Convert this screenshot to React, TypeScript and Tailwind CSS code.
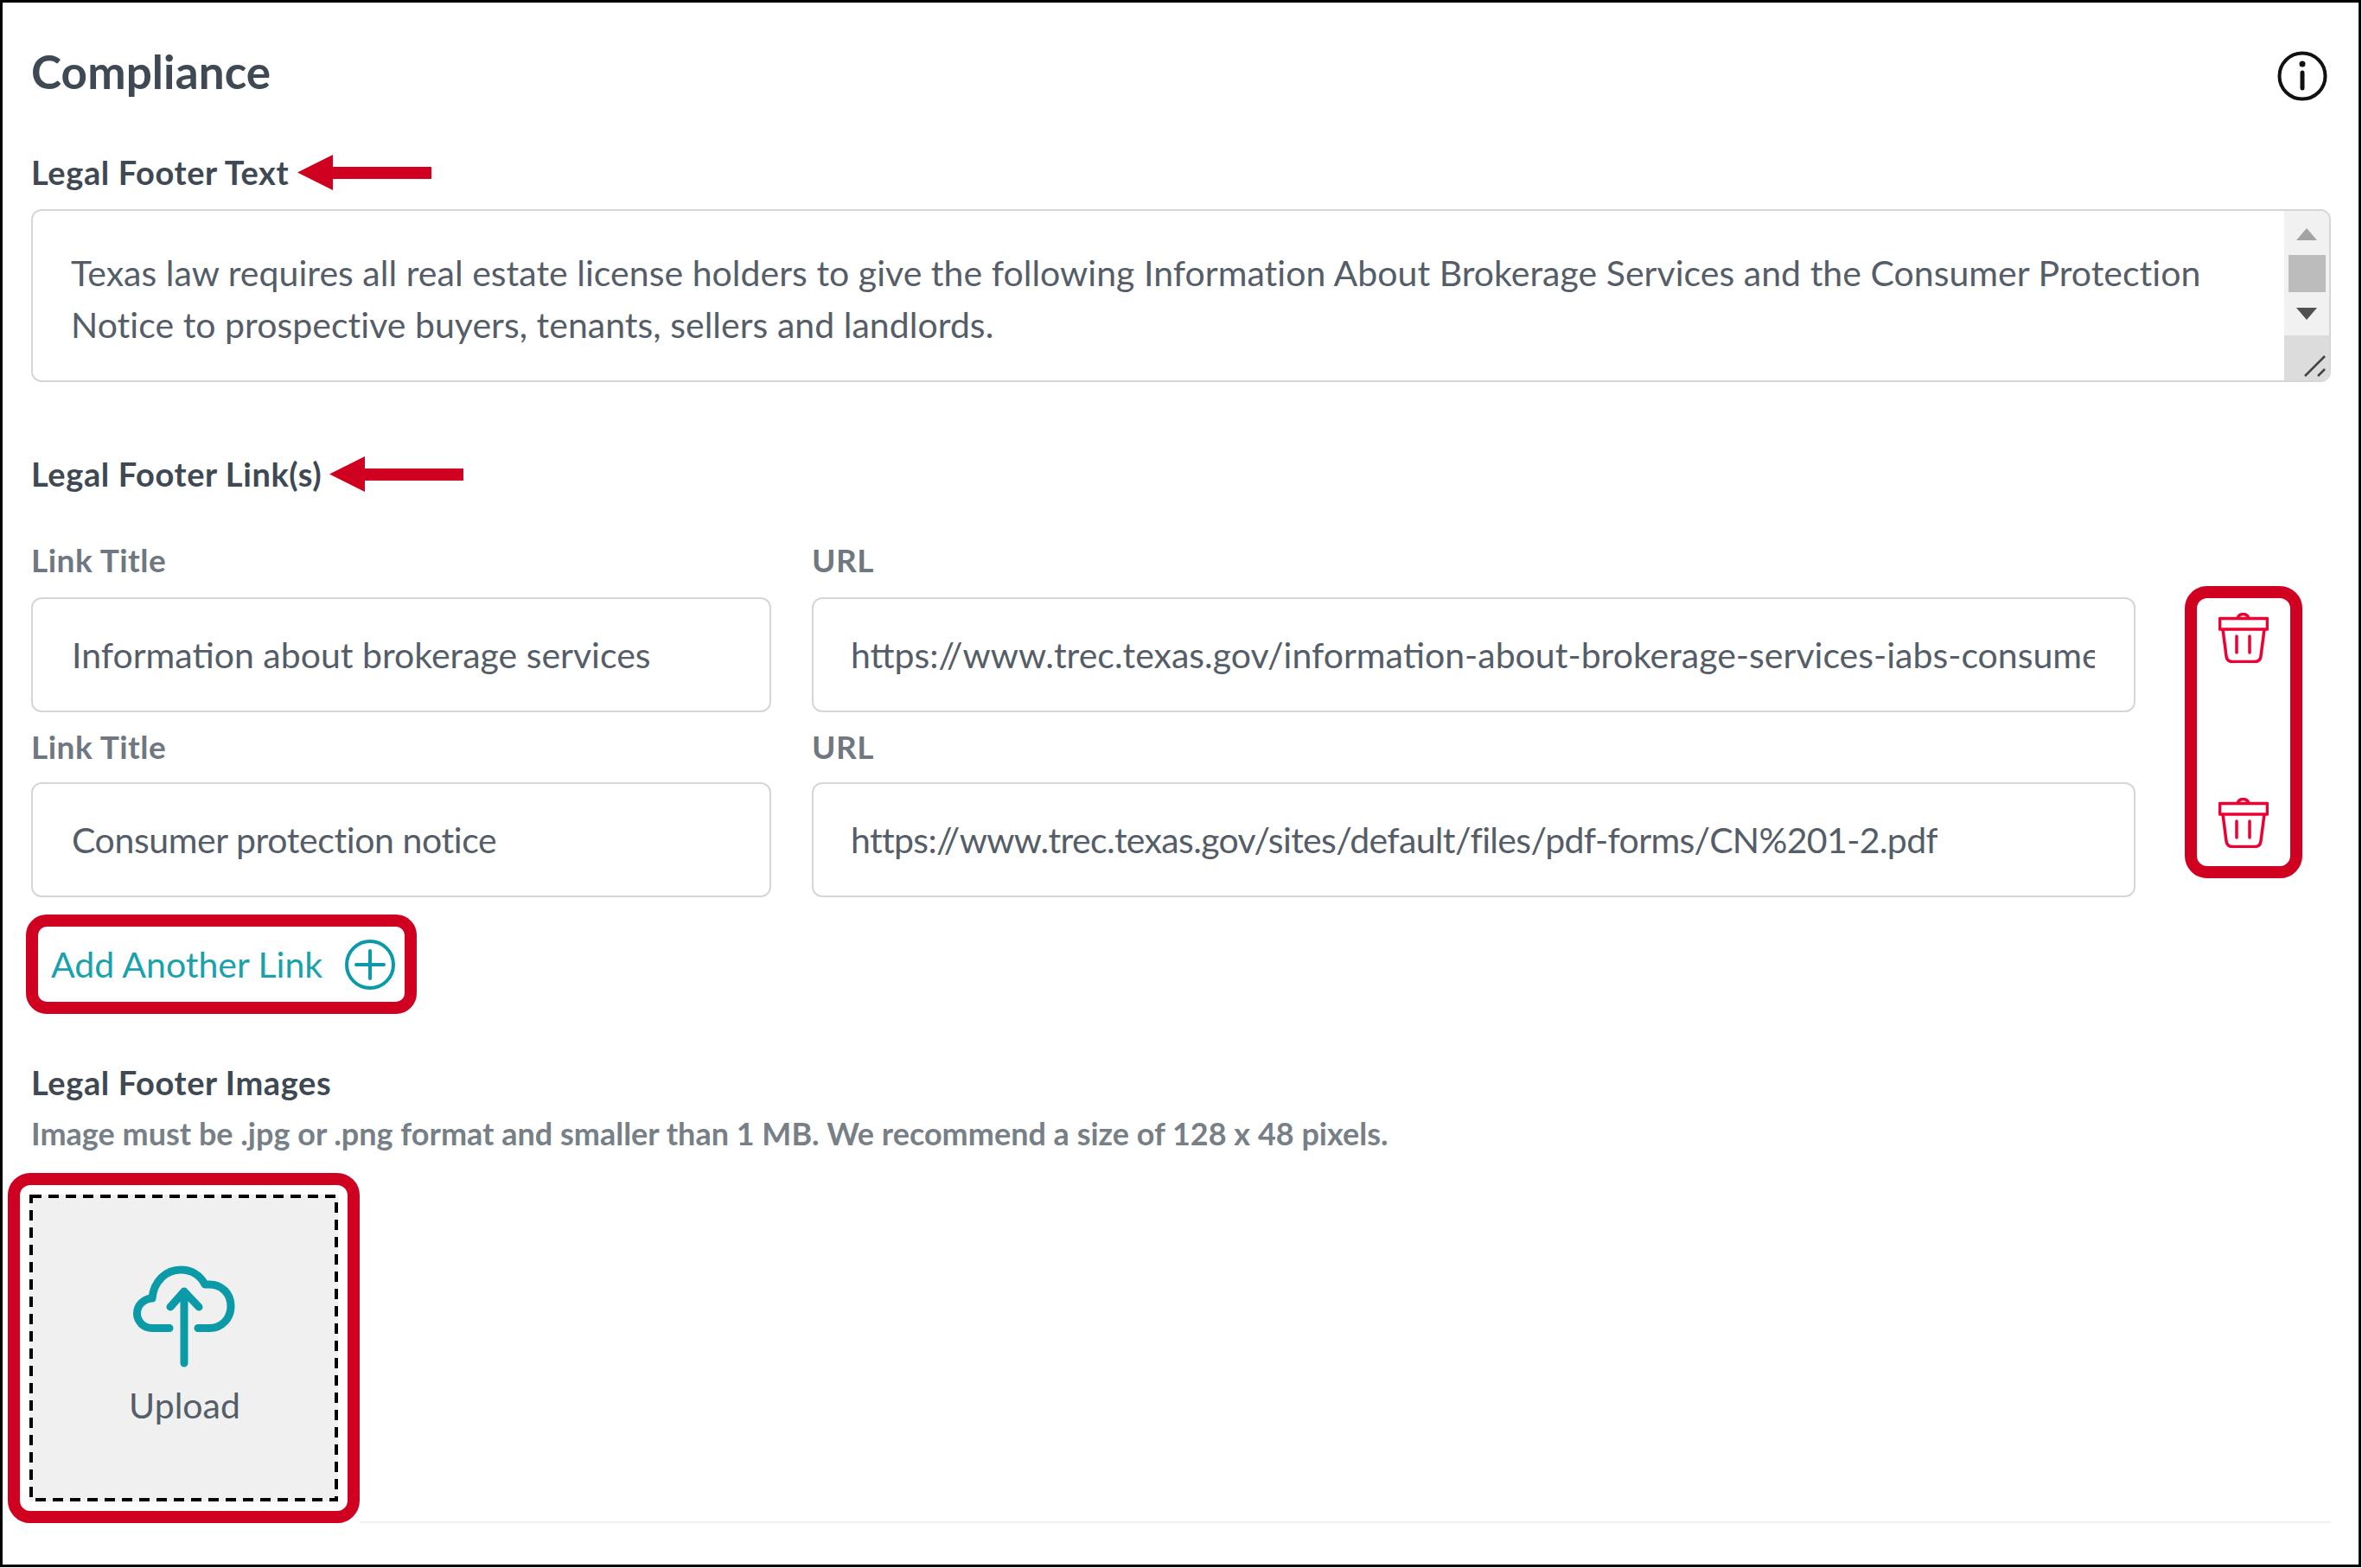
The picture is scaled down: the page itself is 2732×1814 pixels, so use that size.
import React from 'react';

const sans = "font-['Lato','Liberation_Sans',sans-serif]";

const RedArrow: React.FC = () => (
  <svg width="155" height="41" viewBox="0 0 155 41" className="shrink-0">
    <path d="M0 20.5 41 0V14H155V28H41V41Z" fill="#cf0020" />
  </svg>
);

const TrashIcon: React.FC = () => (
  <svg width="58" height="58" viewBox="0 0 58 58" fill="none" stroke="#ee0033" strokeWidth="3.5">
    <path d="M1.5 6.5H56.5V19H1.5Z" strokeLinejoin="round" />
    <path d="M22 6.5C23 3 26 1.5 28.5 1.5S34 3 35 6.5" />
    <path d="M5 19 9 50C9.5 54 12 56.5 16 56.5H42C46 56.5 48.5 54 49 50L53 19" />
    <path d="M21 27V46M36 27V46" strokeLinecap="round" />
  </svg>
);

const LinkRow: React.FC<{ title: string; url: string; className: string; inputClass: string; titleClass: string; urlClass: string }> = ({ title, url, className, inputClass, titleClass, urlClass }) => (
  <div className={`grid grid-cols-[856px_1531px] gap-x-[47px] ${className}`}>
    <div className="h-[40px] text-[37px] leading-[40px] tracking-[0.5px] font-bold text-[#6f7780]">Link Title</div>
    <div className="h-[40px] text-[37px] leading-[40px] tracking-[0.5px] font-bold text-[#6f7780]">URL</div>
    <div className={`h-[133px] flex items-center pl-[45px] pr-[45px] border-2 border-[#d3d7db] rounded-[12px] text-[41px] text-[#555e68] ${inputClass}`}>
      <span className={`overflow-hidden whitespace-nowrap ${titleClass}`}>{title}</span>
    </div>
    <div className={`h-[133px] flex items-center pl-[43px] pr-[45px] border-2 border-[#d3d7db] rounded-[12px] text-[41px] text-[#555e68] ${inputClass}`}>
      <span className={`overflow-hidden whitespace-nowrap ${urlClass}`}>{url}</span>
    </div>
  </div>
);

export default function App() {
  return (
    <div className={`w-[2731px] h-[1813px] border-[3px] border-black bg-white pl-[33px] pr-[32px] pt-[56px] ${sans}`}>
      {/* Header */}
      <div className="flex justify-between items-start pr-[4px]">
        <h1 className="text-[53px] leading-[48px] tracking-[0.1px] font-bold text-[#3f4954]">Compliance</h1>
        <svg width="58" height="58" viewBox="0 0 58 58" fill="none" stroke="#111" strokeWidth="4">
          <circle cx="29" cy="29" r="26.5" />
          <path d="M29 25V43" strokeWidth="5" strokeLinecap="round" />
          <circle cx="29" cy="15" r="3.5" fill="#111" stroke="none" />
        </svg>
      </div>

      {/* Legal footer text */}
      <div className="mt-[62px] h-[40px] flex items-center gap-[10px] text-[38px] tracking-[0.6px] font-bold text-[#3f4954]">
        <span>Legal Footer Text</span>
        <RedArrow />
      </div>
      <div className="mt-[23px] h-[200px] flex border-2 border-[#d3d7db] rounded-[12px] overflow-hidden">
        <div className="flex-1 pl-[44px] pr-[60px] pt-[42px] text-[41px] leading-[60px] tracking-[0.03px] text-[#555e68]">
          Texas law requires all real estate license holders to give the following Information About Brokerage Services and the Consumer Protection Notice to prospective buyers, tenants, sellers and landlords.
        </div>
        <div className="w-[52px] flex flex-col items-center bg-[#f1f1f1]">
          <svg width="24" height="14" viewBox="0 0 24 14" className="mt-[20px]"><path d="M12 0 24 14H0Z" fill="#a3a3a3" /></svg>
          <div className="mt-[17px] w-[43px] h-[43px] bg-[#bcbcbc]" />
          <svg width="24" height="14" viewBox="0 0 24 14" className="mt-[18px]"><path d="M0 0H24L12 14Z" fill="#505050" /></svg>
          <div className="mt-auto w-full h-[52px] bg-[#dcdcdc] flex items-end justify-end p-[2px]">
            <svg width="28" height="28" viewBox="0 0 28 28" fill="none" stroke="#444" strokeWidth="2.5">
              <path d="M2 25 25 2M17 25 25 17" />
            </svg>
          </div>
        </div>
      </div>

      {/* Legal footer links */}
      <div className="mt-[86px] h-[40px] flex items-center gap-[9px] text-[38px] tracking-[0.6px] font-bold text-[#3f4954]">
        <span>Legal Footer Link(s)</span>
        <RedArrow />
      </div>
      <div className="mt-[60px] flex gap-[57px] items-start">
        <div className="w-[2434px]">
          <LinkRow title="Information about brokerage services" url="https://www.trec.texas.gov/information-about-brokerage-services-iabs-consumer-protection-notice" className="" inputClass="mt-[23px]" titleClass="" urlClass="" />
          <LinkRow title="Consumer protection notice" url="https://www.trec.texas.gov/sites/default/files/pdf-forms/CN%201-2.pdf" className="mt-[20px]" inputClass="mt-[21px]" titleClass="tracking-[-0.4px]" urlClass="tracking-[-0.65px]" />
        </div>
        <div className="mt-[50px] w-[136px] h-[338px] border-[14px] border-[#cf0020] rounded-[26px] flex flex-col items-center justify-between pt-[17px] pb-[21px]">
          <TrashIcon />
          <TrashIcon />
        </div>
      </div>

      {/* Add link */}
      <div className="mt-[20px] -ml-[6px] w-[452px] h-[115px] border-[14px] border-[#cf0020] rounded-[24px] flex items-center justify-between pl-[15px] pr-[11px]">
        <span className="text-[41px] text-[#17a2ac] whitespace-nowrap">Add Another Link</span>
        <svg width="58" height="58" viewBox="0 0 58 58" fill="none" stroke="#0a9aa8" strokeWidth="4" className="shrink-0">
          <circle cx="29" cy="29" r="27" />
          <path d="M13 29H45M29 13V45" strokeLinecap="round" />
        </svg>
      </div>

      {/* Images */}
      <div className="mt-[59px] h-[40px] text-[38px] leading-[40px] tracking-[0.6px] font-bold text-[#3f4954]">Legal Footer Images</div>
      <div className="mt-[19px] h-[40px] text-[36px] leading-[40px] font-bold text-[#777f87]">Image must be .jpg or .png format and smaller than 1 MB. We recommend a size of 128 x 48 pixels.</div>
      <div className="mt-[26px] -ml-[27px] flex">
        <div className="shrink-0 w-[407px] h-[405px] border-[14px] border-[#cf0020] rounded-[26px] p-[11px]">
          <div className="relative h-full bg-[#f0f0f0] flex flex-col items-center pt-[82px]">
            <svg className="absolute inset-0 w-full h-full" fill="none">
              <rect x="2" y="2" width="353" height="351" stroke="#000" strokeWidth="4" strokeDasharray="12 8" />
            </svg>
            <svg width="118" height="118" viewBox="0 0 118 118" fill="none" stroke="#0a9aa8" strokeWidth="9" strokeLinecap="round" strokeLinejoin="round">
              <path d="M42 72.5H22C11 72.5 4.5 64 4.5 55.5 4.5 46 12 38.5 22 38 24 18 38 5 55 5 68 5 78 12 83 22H88C103 22 113 33 113 47 113 61 103 72.5 88 72.5H75" />
              <path d="M59 113V30M43 48 59 30 76 48" />
            </svg>
            <div className="mt-[24px] ml-[2px] h-[40px] text-[41px] leading-[40px] text-[#555e68]">Upload</div>
          </div>
        </div>
        <div className="flex-1 self-end border-b-2 border-[#f0f0f0]" />
      </div>
    </div>
  );
}
